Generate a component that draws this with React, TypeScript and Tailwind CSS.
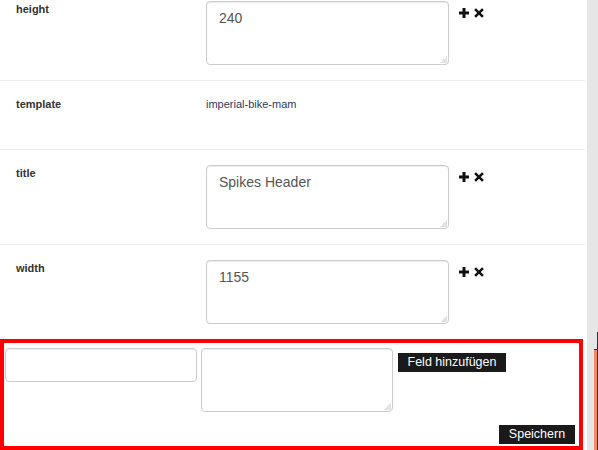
import React from "react";

interface FieldRow {
  name: string;
  value: string;
  editable: boolean;
}

const rows: FieldRow[] = [
  { name: "height", value: "240", editable: true },
  { name: "template", value: "imperial-bike-mam", editable: false },
  { name: "title", value: "Spikes Header", editable: true },
  { name: "width", value: "1155", editable: true },
];

const PlusIcon = () => (
  <svg width="10" height="10" viewBox="0 0 10 10" className="block">
    <path d="M3.5 0h3v3.5H10v3H6.5V10h-3V6.5H0v-3h3.5z" fill="#111" />
  </svg>
);

const CrossIcon = () => (
  <svg width="10" height="10" viewBox="0 0 10 10" className="block">
    <path
      d="M2 0.2L5 3.2 8 0.2 9.8 2 6.8 5 9.8 8 8 9.8 5 6.8 2 9.8 0.2 8 3.2 5 0.2 2z"
      fill="#111"
    />
  </svg>
);

// textarea with the faint grip in the corner, like the browser draws it
const Area: React.FC<{ value?: string; className: string }> = ({
  value,
  className,
}) => (
  <div className={`relative shrink-0 ${className}`}>
    <textarea
      defaultValue={value}
      className="w-full h-full resize-none rounded border border-[#cccccc] px-3 py-[6px] text-[14px] leading-5 text-[#555555] shadow-[inset_0_1px_1px_rgba(0,0,0,0.075)] outline-none"
      style={{ fontFamily: '"Liberation Sans", Arial, sans-serif' }}
    />
    <div className="absolute right-[2px] bottom-[2px] w-[7px] h-[7px] bg-[linear-gradient(135deg,transparent_50%,#e2e2e2_50%)]" />
  </div>
);

const App: React.FC = () => {
  return (
    <div
      className="flex w-[598px] h-[450px] overflow-hidden bg-white"
      style={{ fontFamily: '"Liberation Sans", Arial, sans-serif' }}
    >
      <div className="w-[587px] shrink-0">
        {/* attribute rows, first one scrolled partly out of view */}
        <div className="w-[585px] -mt-[14px]">
          {rows.map((row, i) => (
            <div
              key={row.name}
              className={`flex px-4 pt-[15px] pb-[15px] ${
                i < rows.length - 1 ? "border-b border-[#eeeeee]" : ""
              }`}
            >
              <div className="w-[190px] shrink-0 text-[11px] leading-4 font-bold text-[#333333]">
                {row.name}
              </div>
              {row.editable ? (
                <>
                  <Area value={row.value} className="w-[243px] h-[64px]" />
                  <div className="flex gap-[5px] ml-[10px] mt-[7px] h-[10px]">
                    <PlusIcon />
                    <CrossIcon />
                  </div>
                </>
              ) : (
                <div className="h-[38px] text-[11px] leading-4 text-[#2d3a68]">
                  {row.value}
                </div>
              )}
            </div>
          ))}
        </div>

        {/* new field form */}
        <div className="w-[583px] h-[111px] border-4 border-[#ff0000] flex flex-col pt-[5px] pr-[4px]">
          <div className="flex items-start">
            <input
              type="text"
              className="ml-[1px] w-[192px] h-[34px] rounded border border-[#cccccc] px-3 shadow-[inset_0_1px_1px_rgba(0,0,0,0.075)] outline-none"
            />
            <Area className="w-[192px] h-[64px] ml-[4px]" />
            <button className="ml-[5px] mt-[5px] h-[19px] w-[108px] bg-[#1a1a1a] text-white text-[12.5px] leading-[19px] text-center">
              Feld hinzufügen
            </button>
          </div>
          <div className="flex justify-end mt-[13px]">
            <button className="h-[19px] w-[76px] bg-[#1a1a1a] text-white text-[12.5px] leading-[19px] text-center">
              Speichern
            </button>
          </div>
        </div>
      </div>

      {/* side strip */}
      <div className="flex w-[11px] h-full bg-[#e6e6e6]">
        <div className="w-[7px]" />
        <div className="flex flex-col w-[3px]">
          <div className="h-[349px]" />
          <div className="flex-1 bg-[#ee8a66] border-t border-[#5a3020]" />
        </div>
        <div className="flex flex-col w-[1px]">
          <div className="h-[332px]" />
          <div className="flex-1 bg-[#333333]" />
        </div>
      </div>
    </div>
  );
};

export default App;
